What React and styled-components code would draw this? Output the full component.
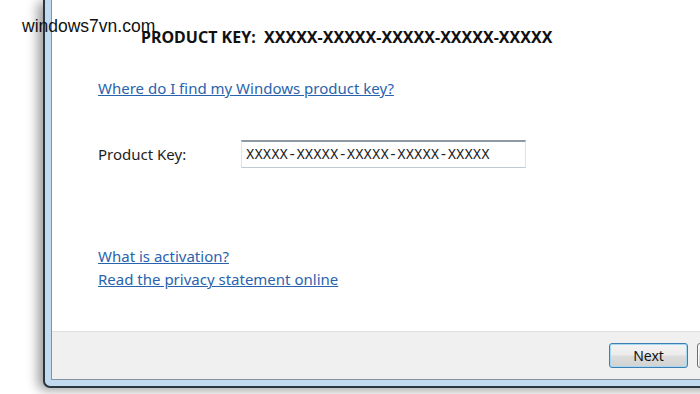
import React from 'react';
import styled, { createGlobalStyle } from 'styled-components';

const GlobalStyle = createGlobalStyle`
  html, body {
    margin: 0;
    padding: 0;
    background: #ffffff;
  }
`;

const Stage = styled.div`
  position: relative;
  width: 700px;
  height: 394px;
  overflow: hidden;
  background: #ffffff;
  font-family: "Noto Sans", "Open Sans", sans-serif;
`;

const Watermark = styled.div`
  position: absolute;
  left: 22px;
  top: 16px;
  z-index: 2;
  font-family: "Liberation Sans", Arial, sans-serif;
  font-size: 17.5px;
  color: #111111;
`;

const Window = styled.div`
  margin-left: 43px;
  width: 747px;
  height: 388px;
  box-sizing: border-box;
  display: flex;
  background: #c2daf0;
  border-left: 2px solid #2c3640;
  border-bottom: 2px solid #2c3640;
  border-bottom-left-radius: 7px;
  padding: 0 0 6px 6px;
  box-shadow: -5px 2px 12px rgba(0, 0, 0, 0.4);
`;

const Client = styled.div`
  flex: 1;
  display: flex;
  flex-direction: column;
  background: #ffffff;
  border-left: 1px solid #8393a3;
  border-bottom: 1px solid #8393a3;
`;

const Body = styled.div`
  flex: 1;
  display: flex;
  flex-direction: column;
  align-items: flex-start;
  padding: 26px 0 0 46px;
`;

const KeyHeading = styled.div`
  margin-left: 43px;
  font-size: 16px;
  font-weight: 700;
  color: #111111;
`;

const Link = styled.a`
  font-size: 15px;
  color: #2a63ad;
  text-decoration: underline;
  line-height: 23px;
  margin-top: ${p => p.$gap || 0}px;
  cursor: pointer;
`;

const FieldRow = styled.div`
  display: flex;
  align-items: center;
  margin-top: 40px;
`;

const Label = styled.label`
  width: 143px;
  font-size: 15px;
  color: #1e1e1e;
`;

const KeyInput = styled.div`
  width: 285px;
  height: 28px;
  box-sizing: border-box;
  display: flex;
  align-items: center;
  padding-left: 4px;
  border: 1px solid #dde3e8;
  border-top: 2px solid #8c9aa6;
  border-bottom: 1px solid #bfcad2;
  font-family: "Liberation Mono", "Courier New", monospace;
  font-size: 14px;
  color: #222222;
  background: #ffffff;
`;

const Footer = styled.div`
  height: 48px;
  display: flex;
  align-items: flex-start;
  justify-content: flex-end;
  gap: 9px;
  padding: 11px 14px 0 0;
  box-sizing: border-box;
  background: #f0f0f0;
  border-top: 1px solid #dfdfdf;
`;

const Button = styled.button`
  width: 79px;
  height: 25px;
  border-radius: 3px;
  border: 1px solid ${p => (p.$primary ? '#3b7fb4' : '#707070')};
  box-shadow: inset 0 0 0 1px ${p => (p.$primary ? '#a6d8f2' : '#fcfcfc')};
  background: linear-gradient(#f4f4f4 0%, #ebebeb 48%, #dcdcdc 52%, #d2d2d2 100%);
  font-family: "Noto Sans", "Open Sans", sans-serif;
  font-size: 14px;
  color: #111111;
  padding: 0;
`;

export default function App() {
  return (
    <>
      <GlobalStyle />
      <Stage>
        <Watermark>windows7vn.com</Watermark>
        <Window>
          <Client>
            <Body>
              <KeyHeading>PRODUCT KEY:&nbsp; XXXXX-XXXXX-XXXXX-XXXXX-XXXXX</KeyHeading>
              <Link $gap={29}>Where do I find my Windows product key?</Link>
              <FieldRow>
                <Label>Product Key:</Label>
                <KeyInput>XXXXX-XXXXX-XXXXX-XXXXX-XXXXX</KeyInput>
              </FieldRow>
              <Link $gap={77}>What is activation?</Link>
              <Link>Read the privacy statement online</Link>
            </Body>
            <Footer>
              <Button $primary>Next</Button>
              <Button>Cancel</Button>
            </Footer>
          </Client>
        </Window>
      </Stage>
    </>
  );
}
